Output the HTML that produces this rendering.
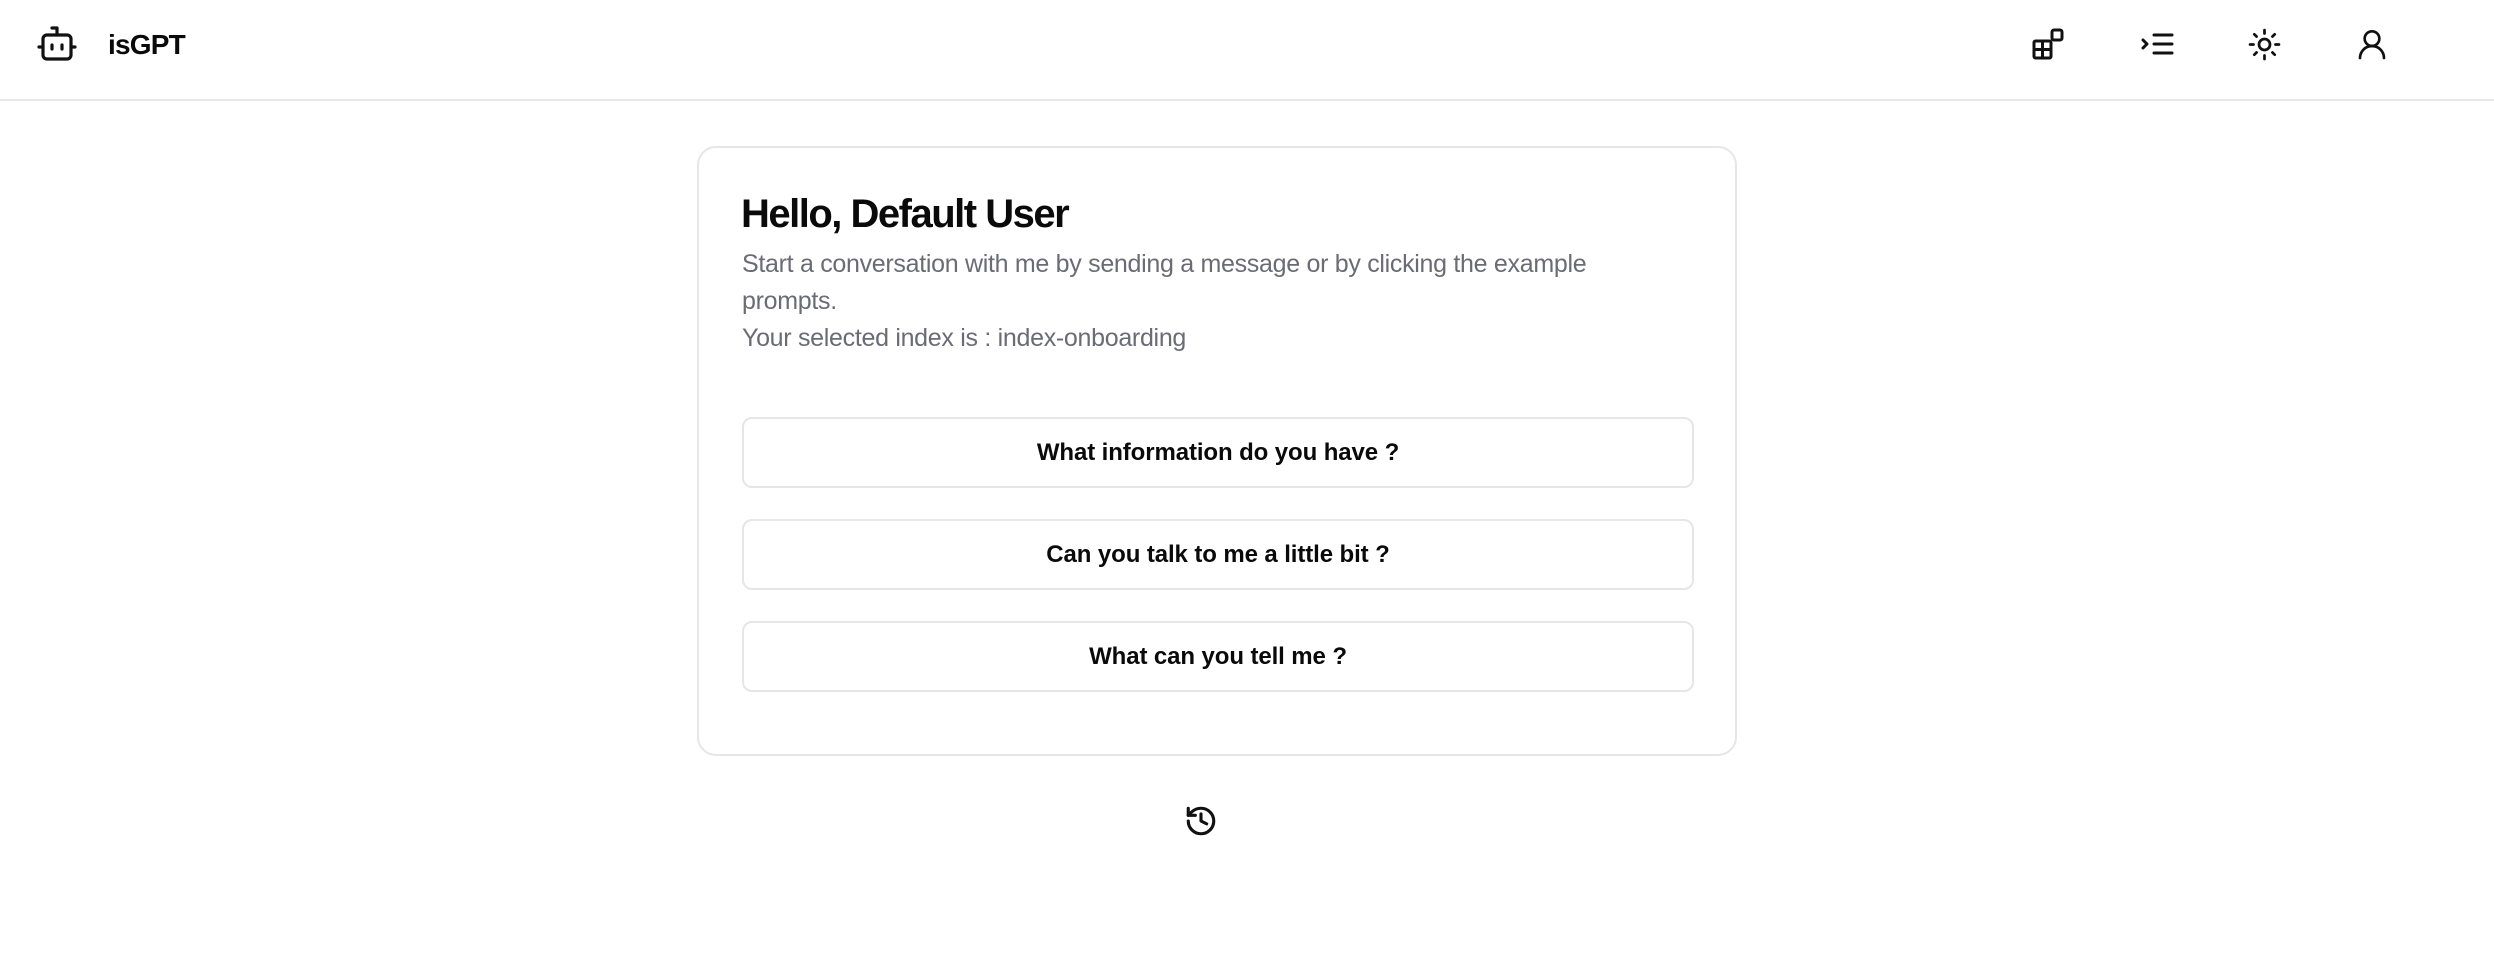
<!DOCTYPE html>
<html><head><meta charset="utf-8"><style>
*{margin:0;padding:0;box-sizing:border-box}
body{width:2494px;height:974px;background:#fff;font-family:"Liberation Sans",sans-serif;position:relative;overflow:hidden;color:#0a0a0a}
.hdr{position:absolute;left:0;top:0;width:2494px;height:101px;border-bottom:2px solid #e8e8ea}
.logo{position:absolute;left:108px;top:29px;font-size:28px;font-weight:bold;letter-spacing:-0.8px}
svg{position:absolute}
.card{position:absolute;left:697px;top:146px;width:1040px;height:610px;border:2px solid #e6e6e9;border-radius:19px}
h1{position:absolute;left:42px;top:44px;font-size:40px;letter-spacing:-1.5px;font-weight:bold}
.p{position:absolute;left:43px;top:98px;font-size:25px;line-height:37px;color:#6b6b75;letter-spacing:-0.3px}
.btn{position:absolute;left:43px;width:952px;height:71px;border:2px solid #e6e6e9;border-radius:10px;font-size:24px;font-weight:bold;text-align:center;line-height:67px;letter-spacing:-0.1px}
</style></head><body>
<div class="hdr">
<svg style="left:37px;top:25px" width="40" height="38" viewBox="0 0 40 38" fill="none" stroke="#111" stroke-width="3.2" stroke-linecap="round" stroke-linejoin="round"><path d="M20 10V3h-5"/><rect x="6" y="10" width="28" height="24" rx="4"/><path d="M2 22h4M34 22h4M15 20v4M25 20v4"/></svg>
<div class="logo">isGPT</div>
<svg style="left:2032px;top:28px" width="32" height="32" viewBox="0 0 32 32" fill="none" stroke="#111" stroke-width="3" stroke-linecap="round" stroke-linejoin="round"><rect x="2" y="13" width="17" height="17" rx="1.5"/><path d="M2 21.5h17M10.5 13v17"/><rect x="20" y="2" width="10" height="10" rx="2"/></svg>
<svg style="left:2140px;top:30px" width="34" height="28" viewBox="0 0 34 28" fill="none" stroke="#111" stroke-width="3" stroke-linecap="round" stroke-linejoin="round"><path d="M3 10l4 4-4 4M14 5h18M14 14h18M14 23h18"/></svg>
<svg style="left:2248px;top:28px" width="33" height="33" viewBox="0 0 24 24" fill="none" stroke="#111" stroke-width="2" stroke-linecap="round"><circle cx="12" cy="12" r="4"/><path d="M12 1.5v2.5M12 20v2.5M4.6 4.6l1.6 1.6M17.8 17.8l1.6 1.6M1.5 12h2.5M20 12h2.5M4.6 19.4l1.6-1.6M17.8 6.2l1.6-1.6"/></svg>
<svg style="left:2356px;top:28px" width="32" height="32" viewBox="0 0 24 24" fill="none" stroke="#111" stroke-width="2" stroke-linecap="round"><circle cx="12" cy="8" r="5.5"/><path d="M3 22.5a9 9 0 0 1 18 0"/></svg>
</div>
<div class="card">
<h1>Hello, Default User</h1>
<div class="p">Start a conversation with me by sending a message or by clicking the example<br>prompts.<br>Your selected index is : index-onboarding</div>
<div class="btn" style="top:269px">What information do you have ?</div>
<div class="btn" style="top:371px">Can you talk to me a little bit ?</div>
<div class="btn" style="top:473px">What can you tell me ?</div>
</div>
<svg style="left:1184px;top:804px" width="34" height="34" viewBox="0 0 24 24" fill="none" stroke="#111" stroke-width="2.2" stroke-linecap="round" stroke-linejoin="round"><path d="M3 12a9 9 0 1 0 9-9 9.75 9.75 0 0 0-6.74 2.74L3 8"/><path d="M3 3v5h5"/><path d="M12 7v5l4 2"/></svg>
</body></html>
